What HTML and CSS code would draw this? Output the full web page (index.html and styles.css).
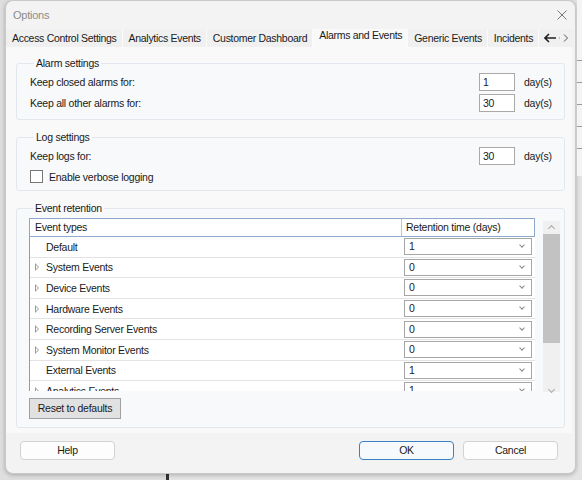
FILE: index.html
```html
<!DOCTYPE html>
<html lang="en">
<head>
    <meta charset="UTF-8">
    <title>Options</title>
    <link rel="stylesheet" href="styles.css">
</head>
<body>
    <div class="desk">
        <div class="dialog">
            <div class="titlebar">
                <span class="title">Options</span>
                <svg class="close" width="10" height="10" viewBox="0 0 10 10"><path d="M0.5 0.5 L9.5 9.5 M9.5 0.5 L0.5 9.5" stroke="#777" stroke-width="1"/></svg>
            </div>

            <div class="tabs">
                <div class="tab">Access Control Settings</div>
                <div class="tab">Analytics Events</div>
                <div class="tab">Customer Dashboard</div>
                <div class="tab active">Alarms and Events</div>
                <div class="tab">Generic Events</div>
                <div class="tab">Incidents</div>
                <div class="tab arrows">
                    <svg width="26" height="10" viewBox="0 0 26 10"><path d="M5 1 L1 5 L5 9 M1 5 L12 5" stroke="#222" stroke-width="1.6" fill="none"/><path d="M15 5 L16 5" stroke="#888"/><path d="M20 1.5 L23.5 5 L20 8.5" stroke="#555" stroke-width="1" fill="none"/></svg>
                </div>
            </div>

            <div class="panel">
                <fieldset class="group alarms">
                    <legend>Alarm settings</legend>
                    <div class="row">
                        <span class="label">Keep closed alarms for:</span>
                        <span class="num">1</span>
                        <span class="unit">day(s)</span>
                    </div>
                    <div class="row">
                        <span class="label">Keep all other alarms for:</span>
                        <span class="num">30</span>
                        <span class="unit">day(s)</span>
                    </div>
                </fieldset>

                <fieldset class="group logs">
                    <legend>Log settings</legend>
                    <div class="row">
                        <span class="label">Keep logs for:</span>
                        <span class="num">30</span>
                        <span class="unit">day(s)</span>
                    </div>
                    <div class="check-row">
                        <span class="checkbox"></span>
                        <span>Enable verbose logging</span>
                    </div>
                </fieldset>

                <fieldset class="group retention">
                    <legend>Event retention</legend>
                    <div class="grid-wrap">
                        <div class="grid">
                            <div class="grid-head">
                                <div class="col-type">Event types</div>
                                <div class="col-time">Retention time (days)</div>
                            </div>
                            <div class="grid-body">
                                <div class="grid-row"><span class="name">Default</span><span class="combo">1<i></i></span></div>
                                <div class="grid-row"><span class="name"><b class="expander"></b>System Events</span><span class="combo">0<i></i></span></div>
                                <div class="grid-row"><span class="name"><b class="expander"></b>Device Events</span><span class="combo">0<i></i></span></div>
                                <div class="grid-row"><span class="name"><b class="expander"></b>Hardware Events</span><span class="combo">0<i></i></span></div>
                                <div class="grid-row"><span class="name"><b class="expander"></b>Recording Server Events</span><span class="combo">0<i></i></span></div>
                                <div class="grid-row"><span class="name"><b class="expander"></b>System Monitor Events</span><span class="combo">0<i></i></span></div>
                                <div class="grid-row"><span class="name">External Events</span><span class="combo">1<i></i></span></div>
                                <div class="grid-row"><span class="name"><b class="expander"></b>Analytics Events</span><span class="combo">1<i></i></span></div>
                            </div>
                        </div>
                        <div class="scrollbar">
                            <span class="sb-up"></span>
                            <span class="sb-thumb"></span>
                            <span class="sb-down"></span>
                        </div>
                    </div>
                    <div class="reset">Reset to defaults</div>
                </fieldset>
            </div>

            <div class="footer">
                <div class="btn">Help</div>
                <div class="spacer"></div>
                <div class="btn primary">OK</div>
                <div class="btn">Cancel</div>
            </div>
        </div>
        <div class="behind">
            <div class="behind-line"></div>
            <div class="behind-line"></div>
            <div class="behind-line"></div>
            <div class="behind-line"></div>
            <div class="behind-line"></div>
        </div>
    </div>
</body>
</html>
```

FILE: styles.css
```css
body {
    margin: 0;
    font-family: 'Liberation Sans', Arial, sans-serif;
    font-size: 10.5px;
    letter-spacing: -0.25px;
    color: #1a1a1a;
    background: linear-gradient(to right, #dedede 0, #dedede 166px, #333 166px, #333 169px, #e4e4e4 169px);
}
.desk {
    display: flex;
    width: 582px;
    height: 480px;
    overflow: hidden;
}
.dialog {
    margin-left: 5px;
    width: 571px;
    height: 474px;
    flex-shrink: 0;
    box-sizing: border-box;
    background: #f3f3f3;
    border: 1px solid #c9c9c9;
    border-radius: 8px;
    box-shadow: 0 1px 4px rgba(0,0,0,0.25);
    display: flex;
    flex-direction: column;
}
.titlebar {
    height: 28px;
    display: flex;
    align-items: center;
    justify-content: space-between;
    padding: 0 8px 0 7px;
}
.title {
    color: #8c8c8c;
    font-size: 11px;
}
.tabs {
    display: flex;
    align-items: flex-end;
    height: 18px;
    overflow: hidden;
    letter-spacing: -0.3px;
}
.tab {
    height: 18px;
    line-height: 18px;
    padding: 0 5px 0 6px;
    background: #f0f0f0;
    border-right: 1px solid #fbfbfb;
    white-space: nowrap;
    flex-shrink: 0;
}
.tab.active {
    height: 21px;
    line-height: 19px;
    background: #f9f9f9;
    padding: 0 5px 0 6px;
}
.tab.arrows {
    display: flex;
    align-items: center;
    padding: 0 4px 0 5px;
    border-right: none;
}
.panel {
    height: 386px;
    margin-right: 3px;
    background: #f9f9f9;
    padding: 10px 7px 0 10px;
    box-sizing: border-box;
    display: flex;
    flex-direction: column;
}
.group {
    box-sizing: border-box;
    flex-shrink: 0;
    margin: 0 0 11px 0;
    border: 1px solid #e2e7ee;
    border-radius: 3px;
    background: #f7f9fb;
    padding: 1px 0 0 13px;
}
.group legend {
    padding: 0 2px;
    margin-left: 4px;
    line-height: 13px;
    color: #1a1a1a;
}
.row {
    display: flex;
    align-items: center;
    height: 21px;
}
.label {
    flex: 1;
}
.num {
    width: 31px;
    height: 16px;
    line-height: 16px;
    padding-left: 3px;
    background: #fff;
    border: 1px solid #a9a9a9;
    margin-right: 9px;
}
.unit {
    width: 40px;
}
.alarms {
    height: 63px;
}
.logs {
    height: 60px;
}
.check-row {
    display: flex;
    align-items: center;
    height: 21px;
}
.checkbox {
    width: 11px;
    height: 11px;
    border: 1px solid #777;
    background: #fff;
    margin-right: 6px;
}
.retention {
    height: 226px;
    padding: 3px 0 0 12px;
}
.grid-wrap {
    display: flex;
    align-items: flex-start;
}
.grid {
    width: 506px;
}
.grid-head {
    display: flex;
    height: 17px;
    line-height: 17px;
    border: 1px solid #8ea9cc;
    background: #fff;
}
.col-type {
    width: 366px;
    padding-left: 5px;
    border-right: 1px solid #b8c7da;
}
.col-time {
    padding-left: 4px;
}
.grid-body {
    height: 154px;
    overflow: hidden;
    border-left: 1px solid #9a9a9a;
    background: #fff;
}
.grid-row {
    display: flex;
    align-items: center;
    height: 20.6px;
    box-sizing: border-box;
    border-bottom: 1px solid #e3e3e3;
}
.name {
    box-sizing: border-box;
    width: 374px;
    padding-left: 16px;
    position: relative;
}
.expander {
    position: absolute;
    left: 5px;
    top: 2px;
    width: 0;
    height: 0;
    border-left: 4px solid #999;
    border-top: 4px solid transparent;
    border-bottom: 4px solid transparent;
}
.expander::after {
    content: "";
    position: absolute;
    left: -3px;
    top: -2px;
    border-left: 2px solid #fff;
    border-top: 2px solid transparent;
    border-bottom: 2px solid transparent;
}
.combo {
    box-sizing: border-box;
    width: 128px;
    height: 17px;
    line-height: 15px;
    padding-left: 4px;
    border: 1px solid #a6a6a6;
    background: #fff;
    position: relative;
}
.combo i {
    position: absolute;
    right: 7px;
    top: 4px;
    width: 3px;
    height: 3px;
    border-right: 1px solid #888;
    border-bottom: 1px solid #888;
    transform: rotate(45deg);
}
.scrollbar {
    width: 17px;
    height: 171px;
    margin: 3px 0 0 8px;
    background: #f0f0f0;
    display: flex;
    flex-direction: column;
    align-items: center;
}
.sb-up, .sb-down {
    width: 4px;
    height: 4px;
    border-left: 1px solid #aaa;
    border-top: 1px solid #aaa;
    transform: rotate(45deg);
    margin-top: 5px;
}
.sb-down {
    transform: rotate(225deg);
    margin-top: 44px;
}
.sb-thumb {
    width: 17px;
    height: 111px;
    margin-top: 3px;
    background: #c2c2c2;
}
.reset {
    width: 90px;
    height: 19px;
    line-height: 19px;
    text-align: center;
    margin-top: 6px;
    background: #e1e1e1;
    border: 1px solid #a0a0a0;
}
.footer {
    display: flex;
    align-items: center;
    padding: 8px 17px 0 14px;
}
.spacer {
    flex: 1;
}
.btn {
    width: 93px;
    height: 17px;
    line-height: 17px;
    text-align: center;
    background: #fdfdfd;
    border: 1px solid #d2d2d2;
    border-radius: 4px;
    margin-left: 9px;
}
.btn:first-child {
    margin-left: 0;
}
.btn.primary {
    border-color: #3b7fc4;
    background: #f7fafd;
}
.behind {
    flex: 1;
    height: 176px;
    margin-left: 1px;
    background: #f4f4f4;
    display: flex;
    flex-direction: column;
    padding-top: 60px;
    box-sizing: border-box;
}
.behind-line {
    height: 1px;
    background: #9a9a9a;
    margin-bottom: 21px;
}
```
